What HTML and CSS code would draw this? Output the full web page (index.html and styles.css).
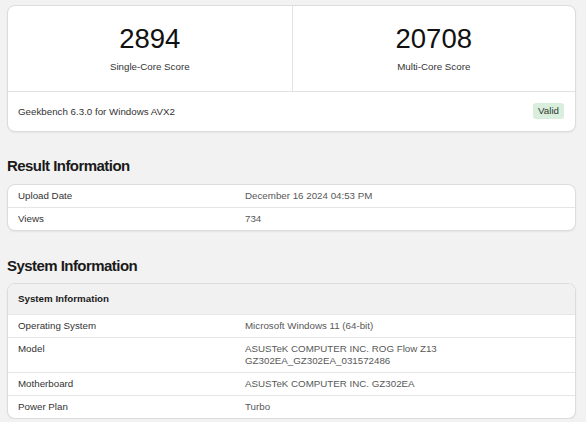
FILE: index.html
```html
<!DOCTYPE html>
<html>
<head>
<meta charset="utf-8">
<link rel="stylesheet" href="styles.css">
</head>
<body>
<div class="page">
  <div class="card scores">
    <div class="score-row">
      <div class="score-cell">
        <div class="score">2894</div>
        <div class="score-label">Single-Core Score</div>
      </div>
      <div class="score-cell">
        <div class="score">20708</div>
        <div class="score-label">Multi-Core Score</div>
      </div>
    </div>
    <div class="score-footer">
      <span>Geekbench 6.3.0 for Windows AVX2</span>
      <span class="badge">Valid</span>
    </div>
  </div>

  <h2 class="section-title">Result Information</h2>
  <div class="card table">
    <div class="row"><div class="name">Upload Date</div><div class="value">December 16 2024 04:53 PM</div></div>
    <div class="row"><div class="name">Views</div><div class="value">734</div></div>
  </div>

  <h2 class="section-title">System Information</h2>
  <div class="card table">
    <div class="row head"><div class="name">System Information</div></div>
    <div class="row"><div class="name">Operating System</div><div class="value">Microsoft Windows 11 (64-bit)</div></div>
    <div class="row"><div class="name">Model</div><div class="value">ASUSTeK COMPUTER INC. ROG Flow Z13<br>GZ302EA_GZ302EA_031572486</div></div>
    <div class="row"><div class="name">Motherboard</div><div class="value">ASUSTeK COMPUTER INC. GZ302EA</div></div>
    <div class="row"><div class="name">Power Plan</div><div class="value">Turbo</div></div>
  </div>
</div>
</body>
</html>
```
FILE: styles.css
```css
html, body {
  margin: 0;
  padding: 0;
  background: #f2f2f2;
}
body {
  font-family: "Liberation Sans", Arial, sans-serif;
  font-size: 9.75px;
  color: #333;
}
.page {
  padding: 5px 10px 0 7px;
  display: flex;
  flex-direction: column;
}
.card {
  background: #fff;
  border: 1px solid #dcdcdc;
  border-radius: 8px;
  box-shadow: 0 1px 2px rgba(0,0,0,0.06);
  overflow: hidden;
}
.score-row {
  display: grid;
  grid-template-columns: 1fr 1fr;
  border-bottom: 1px solid #e2e2e2;
}
.score-cell {
  height: 85px;
  display: flex;
  flex-direction: column;
  align-items: center;
  padding-top: 17px;
  box-sizing: border-box;
}
.score-cell + .score-cell {
  border-left: 1px solid #e2e2e2;
}
.score {
  font-size: 27.5px;
  line-height: 31px;
  color: #111;
}
.score-label {
  margin-top: 7px;
  line-height: 12px;
  color: #333;
}
.score-footer {
  height: 39px;
  display: flex;
  align-items: center;
  justify-content: space-between;
  padding: 0 11px 0 10px;
  color: #333;
}
.badge {
  background: #d9eedc;
  color: #2f3b31;
  border-radius: 3px;
  padding: 2px 5px;
  line-height: 12px;
  margin-bottom: 1px;
}
.section-title {
  margin: 0;
  font-size: 15px;
  letter-spacing: -0.55px;
  font-weight: bold;
  color: #1a1a1a;
  line-height: 18px;
}
.scores + .section-title {
  margin-top: 25px;
  margin-bottom: 9px;
}
.table + .section-title {
  margin-top: 26px;
  margin-bottom: 8px;
}
.row {
  display: flex;
  line-height: 12px;
  padding: 5px 0;
  border-top: 1px solid #e6e6e6;
}
.row:first-child {
  border-top: none;
}
.row .name {
  width: 227px;
  padding-left: 10px;
  color: #333;
}
.row .value {
  flex: 1;
  color: #585858;
}
.row.head {
  background: #f1f1f1;
  padding: 9px 0;
}
.row.head .name {
  font-weight: bold;
  color: #1a1a1a;
}
```
